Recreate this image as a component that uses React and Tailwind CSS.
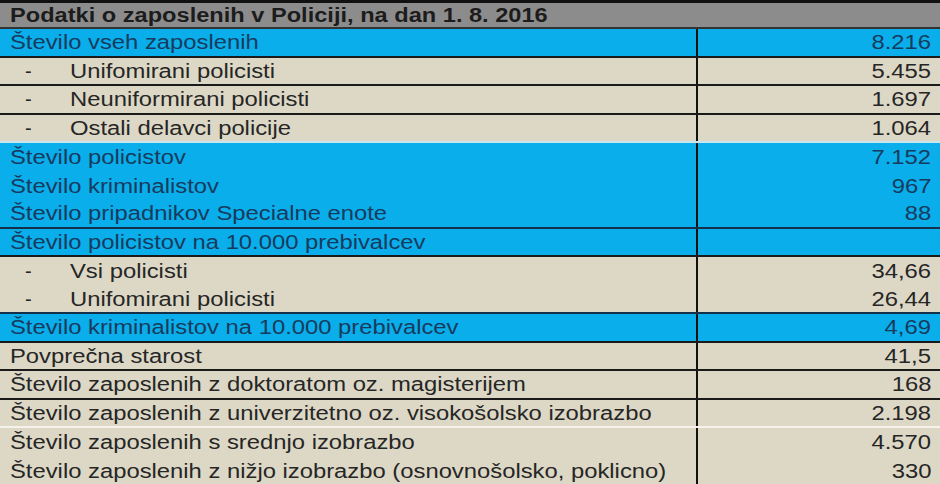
import React from "react";

// vrstice tabele: label, value, blue ozadje, dash (podvrstica), spodnja črta
const rows = [
  { label: "Število vseh zaposlenih", value: "8.216", blue: true, border: "black" },
  { label: "Unifomirani policisti", value: "5.455", dash: true, border: "black" },
  { label: "Neuniformirani policisti", value: "1.697", dash: true, border: "black" },
  { label: "Ostali delavci policije", value: "1.064", dash: true, border: "light" },
  { label: "Število policistov", value: "7.152", blue: true, border: "none" },
  { label: "Število kriminalistov", value: "967", blue: true, border: "none" },
  { label: "Število pripadnikov Specialne enote", value: "88", blue: true, border: "navy" },
  { label: "Število policistov na 10.000 prebivalcev", value: "", blue: true, border: "black" },
  { label: "Vsi policisti", value: "34,66", dash: true, border: "none" },
  { label: "Unifomirani policisti", value: "26,44", dash: true, border: "navy" },
  { label: "Število kriminalistov na 10.000 prebivalcev", value: "4,69", blue: true, border: "black" },
  { label: "Povprečna starost", value: "41,5", border: "black" },
  { label: "Število zaposlenih z doktoratom oz. magisterijem", value: "168", border: "black" },
  { label: "Število zaposlenih z univerzitetno oz. visokošolsko izobrazbo", value: "2.198", border: "white" },
  { label: "Število zaposlenih s srednjo izobrazbo", value: "4.570", border: "none" },
  { label: "Število zaposlenih z nižjo izobrazbo (osnovnošolsko, poklicno)", value: "330", border: "none" },
];

const borderClass = {
  black: "border-b-2 border-[#1a1a1a]",
  navy: "border-b-2 border-[#15304a]",
  white: "border-b-2 border-[#f4f2ea]",
  light: "border-b-2 border-[#c9e6ef]",
  none: "",
};

function Row({ row }) {
  const bg = row.blue ? "bg-[#0aaeea] text-[#173b5e]" : "bg-[#ddd8c5] text-[#262626]";
  return (
    <div className={`flex h-[28.5px] box-border ${bg} ${borderClass[row.border]}`}>
      <div className="w-[696px] flex items-center pl-[10px] whitespace-nowrap">
        {row.dash ? (
          <>
            <span className="w-[60px] pl-[15px]">-</span>
            <span className="inline-block origin-left scale-x-[1.19]">{row.label}</span>
          </>
        ) : (
          <span className="inline-block origin-left scale-x-[1.19]">{row.label}</span>
        )}
      </div>
      <div className="w-[2px] bg-[#111]" />
      <div className="flex-1 flex items-center justify-end pr-[9px] whitespace-nowrap">
        <span className="inline-block origin-right scale-x-[1.19]">{row.value}</span>
      </div>
    </div>
  );
}

export default function App() {
  return (
    <div className="w-[940px] h-[484px] overflow-hidden bg-[#ddd8c5] font-['Liberation_Sans',Arial,sans-serif] text-[20px] leading-none">
      {/* Naslov */}
      <div className="h-[29px] box-border border-t-[3px] border-[#111] border-b-2 border-b-[#333] bg-[#8c8c8c] flex items-center pl-[10px] whitespace-nowrap">
        <span className="inline-block origin-left scale-x-[1.18] font-bold text-[#1c1c1c]">
          Podatki o zaposlenih v Policiji, na dan 1. 8. 2016
        </span>
      </div>
      {rows.map((r, i) => (
        <Row key={i} row={r} />
      ))}
    </div>
  );
}
